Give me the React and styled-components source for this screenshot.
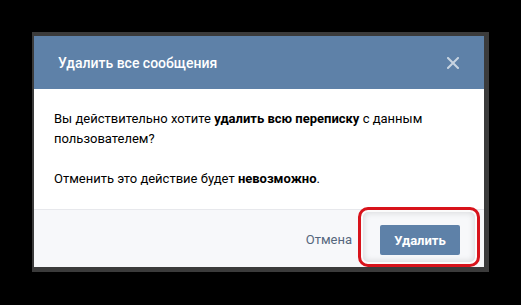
import React from 'react';
import styled, { createGlobalStyle } from 'styled-components';

const GlobalStyle = createGlobalStyle`
  html, body {
    margin: 0;
    padding: 0;
    background: #000;
  }
  body {
    font-family: Roboto, "Open Sans", "Liberation Sans", sans-serif;
    -webkit-font-smoothing: antialiased;
  }
`;

const Page = styled.div`
  width: 521px;
  height: 305px;
  padding: 32px 0 0 32px;
  box-sizing: border-box;
`;

const Backdrop = styled.div`
  width: 457px;
  height: 240px;
  box-sizing: border-box;
  padding: 4px 5px 5px 2px;
  background: #3b3b3b;
`;

const Dialog = styled.div`
  width: 450px;
  height: 231px;
  display: flex;
  flex-direction: column;
  background: #fff;
`;

const Header = styled.div`
  height: 53px;
  flex-shrink: 0;
  display: flex;
  align-items: center;
  justify-content: space-between;
  padding: 0 25px 0 24px;
  background: #5e81a8;
`;

const Title = styled.div`
  color: #fff;
  font-size: 14px;
  font-weight: 500;
  padding-top: 1px;
`;

const CloseButton = styled.button`
  width: 12px;
  height: 12px;
  padding: 0;
  border: 0;
  background: none;
  display: flex;
  cursor: pointer;
`;

const Body = styled.div`
  height: 120px;
  box-sizing: border-box;
  padding: 20px 20px 0 20px;
  font-size: 13px;
  line-height: 20px;
  color: #000;
`;

const Paragraph = styled.p`
  margin: 0 0 20px;
`;

const Footer = styled.div`
  position: relative;
  flex: 1;
  display: flex;
  justify-content: flex-end;
  align-items: flex-start;
  gap: 28px;
  padding: 15px 24px 0 0;
  background: #f7f8fa;
  border-top: 1px solid #e7e8ec;
`;

const CancelLink = styled.span`
  font-size: 13px;
  color: #55677d;
  line-height: 30px;
`;

const PrimaryButton = styled.button`
  width: 80px;
  height: 30px;
  padding: 0;
  border: 0;
  border-radius: 2px;
  background: #5e81a8;
  color: #fff;
  font-family: inherit;
  font-size: 13px;
  font-weight: 700;
`;

const Highlight = styled.div`
  position: absolute;
  left: 324px;
  top: -3px;
  width: 122px;
  height: 60px;
  box-sizing: border-box;
  border: 3px solid #d8131b;
  border-radius: 10px;
  box-shadow: inset 0 0 0 2px #fbfbfb, inset 0 0 6px 3px rgba(0, 0, 0, 0.12);
  pointer-events: none;
`;

const CloseIcon = () => (
  <svg width="12" height="12" viewBox="0 0 12 12">
    <path d="M1 1 L11 11 M11 1 L1 11" stroke="#c8d4e1" strokeWidth="2" strokeLinecap="square" />
  </svg>
);

const App = () => {
  return (
    <Page>
      <GlobalStyle />
      <Backdrop>
        <Dialog>
          <Header>
            <Title>Удалить все сообщения</Title>
            <CloseButton aria-label="Закрыть">
              <CloseIcon />
            </CloseButton>
          </Header>
          <Body>
            <Paragraph>
              Вы действительно хотите <b>удалить всю переписку</b> с данным пользователем?
            </Paragraph>
            <Paragraph>
              Отменить это действие будет <b>невозможно</b>.
            </Paragraph>
          </Body>
          <Footer>
            <CancelLink>Отмена</CancelLink>
            <PrimaryButton>Удалить</PrimaryButton>
            <Highlight />
          </Footer>
        </Dialog>
      </Backdrop>
    </Page>
  );
};

export default App;
